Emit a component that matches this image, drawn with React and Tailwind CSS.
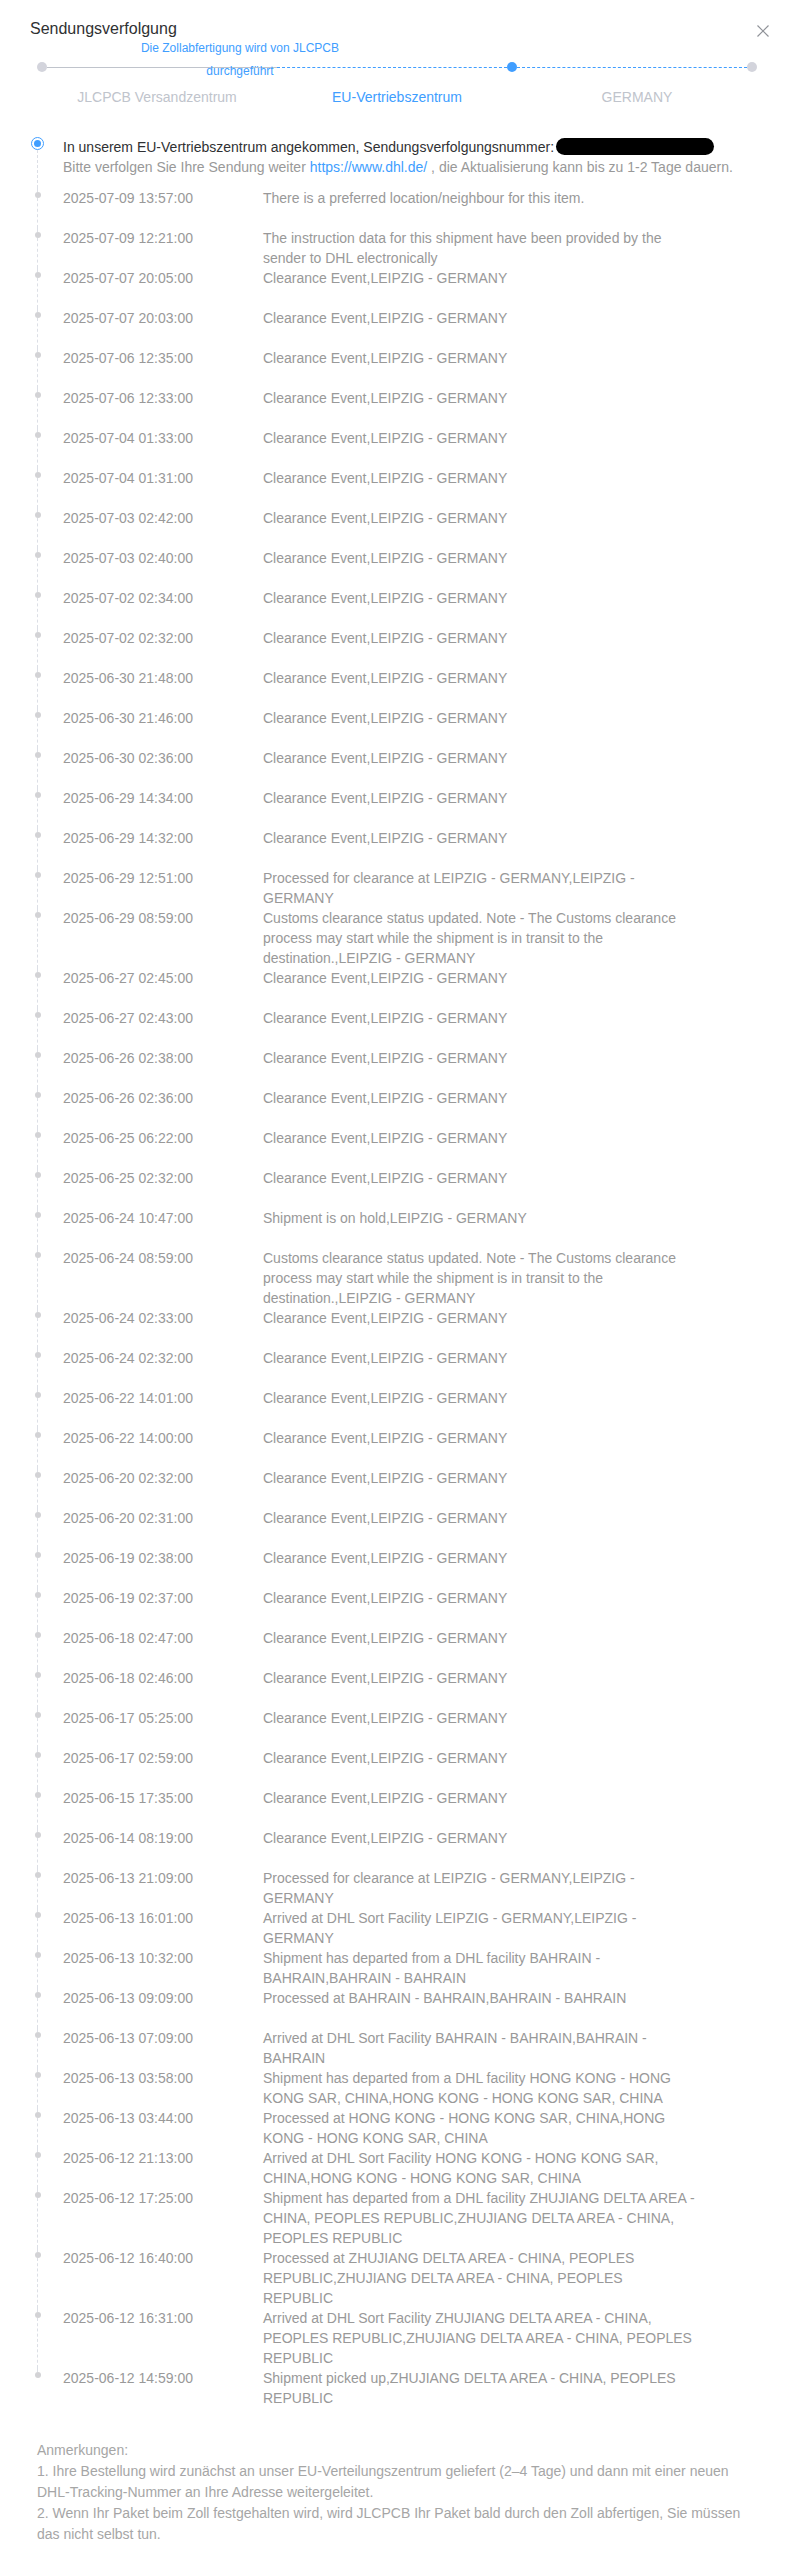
const CLR = 'Clearance Event,LEIPZIG - GERMANY';
const CUSTOMS =
  'Customs clearance status updated. Note - The Customs clearance process may start while the shipment is in transit to the destination.,LEIPZIG - GERMANY';
const ZJ = 'ZHUJIANG DELTA AREA - CHINA, PEOPLES REPUBLIC';
const HK = 'HONG KONG - HONG KONG SAR, CHINA';

const events = [
  ['2025-07-09 13:57:00', 'There is a preferred location/neighbour for this item.'],
  ['2025-07-09 12:21:00', 'The instruction data for this shipment have been provided by the sender to DHL electronically'],
  ['2025-07-07 20:05:00', CLR],
  ['2025-07-07 20:03:00', CLR],
  ['2025-07-06 12:35:00', CLR],
  ['2025-07-06 12:33:00', CLR],
  ['2025-07-04 01:33:00', CLR],
  ['2025-07-04 01:31:00', CLR],
  ['2025-07-03 02:42:00', CLR],
  ['2025-07-03 02:40:00', CLR],
  ['2025-07-02 02:34:00', CLR],
  ['2025-07-02 02:32:00', CLR],
  ['2025-06-30 21:48:00', CLR],
  ['2025-06-30 21:46:00', CLR],
  ['2025-06-30 02:36:00', CLR],
  ['2025-06-29 14:34:00', CLR],
  ['2025-06-29 14:32:00', CLR],
  ['2025-06-29 12:51:00', 'Processed for clearance at LEIPZIG - GERMANY,LEIPZIG - GERMANY'],
  ['2025-06-29 08:59:00', CUSTOMS],
  ['2025-06-27 02:45:00', CLR],
  ['2025-06-27 02:43:00', CLR],
  ['2025-06-26 02:38:00', CLR],
  ['2025-06-26 02:36:00', CLR],
  ['2025-06-25 06:22:00', CLR],
  ['2025-06-25 02:32:00', CLR],
  ['2025-06-24 10:47:00', 'Shipment is on hold,LEIPZIG - GERMANY'],
  ['2025-06-24 08:59:00', CUSTOMS],
  ['2025-06-24 02:33:00', CLR],
  ['2025-06-24 02:32:00', CLR],
  ['2025-06-22 14:01:00', CLR],
  ['2025-06-22 14:00:00', CLR],
  ['2025-06-20 02:32:00', CLR],
  ['2025-06-20 02:31:00', CLR],
  ['2025-06-19 02:38:00', CLR],
  ['2025-06-19 02:37:00', CLR],
  ['2025-06-18 02:47:00', CLR],
  ['2025-06-18 02:46:00', CLR],
  ['2025-06-17 05:25:00', CLR],
  ['2025-06-17 02:59:00', CLR],
  ['2025-06-15 17:35:00', CLR],
  ['2025-06-14 08:19:00', CLR],
  ['2025-06-13 21:09:00', 'Processed for clearance at LEIPZIG - GERMANY,LEIPZIG - GERMANY'],
  ['2025-06-13 16:01:00', 'Arrived at DHL Sort Facility LEIPZIG - GERMANY,LEIPZIG - GERMANY'],
  ['2025-06-13 10:32:00', 'Shipment has departed from a DHL facility BAHRAIN - BAHRAIN,BAHRAIN - BAHRAIN'],
  ['2025-06-13 09:09:00', 'Processed at BAHRAIN - BAHRAIN,BAHRAIN - BAHRAIN'],
  ['2025-06-13 07:09:00', 'Arrived at DHL Sort Facility BAHRAIN - BAHRAIN,BAHRAIN - BAHRAIN'],
  ['2025-06-13 03:58:00', `Shipment has departed from a DHL facility ${HK},${HK}`],
  ['2025-06-13 03:44:00', `Processed at ${HK},${HK}`],
  ['2025-06-12 21:13:00', `Arrived at DHL Sort Facility ${HK},${HK}`],
  ['2025-06-12 17:25:00', `Shipment has departed from a DHL facility ${ZJ},${ZJ}`],
  ['2025-06-12 16:40:00', `Processed at ${ZJ},${ZJ}`],
  ['2025-06-12 16:31:00', `Arrived at DHL Sort Facility ${ZJ},${ZJ}`],
  ['2025-06-12 14:59:00', `Shipment picked up,${ZJ}`],
];

function Stepper() {
  return (
    <div className="relative ml-[37px] w-[720px] pt-[21px]">
      <div className="absolute top-[-4px] left-[98px] w-[210px] text-center text-xs leading-[23px] text-[#409eff]">
        Die Zollabfertigung wird von JLCPCB durchgeführt
      </div>
      <div className="flex h-[10px] items-center">
        <span className="h-[10px] w-[10px] shrink-0 rounded-full bg-[#d3d4dc]" />
        <span className="w-[230px] border-t border-[#c0c4cc]" />
        <span className="flex-1 border-t border-dashed border-[#409eff]" />
        <span className="h-[10px] w-[10px] shrink-0 rounded-full bg-[#409eff]" />
        <span className="flex-1 border-t border-dashed border-[#409eff]" />
        <span className="h-[10px] w-[10px] shrink-0 rounded-full bg-[#d3d4dc]" />
      </div>
      <div className="mt-[15px] grid grid-cols-3 text-center text-sm leading-5">
        <span className="text-[#c0c4cc]">JLCPCB Versandzentrum</span>
        <span className="text-[#409eff]">EU-Vertriebszentrum</span>
        <span className="text-[#c0c4cc]">GERMANY</span>
      </div>
    </div>
  );
}

function EventRow({ date, text, last }) {
  return (
    <div className="flex min-h-[40px]">
      <div className="flex w-[13px] shrink-0 flex-col items-center">
        <span className="h-[4px] border-l border-dashed border-[#dcdfe6]" />
        <span className="h-[6px] w-[6px] rounded-full bg-[#d3d3d6]" />
        {!last && <span className="flex-1 border-l border-dashed border-[#dcdfe6]" />}
      </div>
      <div className="ml-[19px] w-[200px] shrink-0 text-sm leading-5 text-[#999]">{date}</div>
      <div className="w-[433px] text-sm leading-5 text-[#999]">{text}</div>
    </div>
  );
}

export default function App() {
  return (
    <div className="min-h-[2554px] w-[786px] bg-white font-['Liberation_Sans',Arial,sans-serif]">
      <div className="flex items-center justify-between pt-[17px] pr-[17px] pl-[30px]">
        <h2 className="text-base leading-6 text-[#303133]">Sendungsverfolgung</h2>
        <svg width="12" height="12" viewBox="0 0 12 12" className="mt-[4px]">
          <path d="M0.5 0.5 L11.5 11.5 M11.5 0.5 L0.5 11.5" stroke="#909399" strokeWidth="1.2" fill="none" />
        </svg>
      </div>

      <Stepper />

      <div className="mt-[30px] ml-[31px]">
        <div className="flex min-h-[51px]">
          <div className="flex w-[13px] shrink-0 flex-col items-center">
            <span className="flex h-[13px] w-[13px] items-center justify-center rounded-full border border-[#409eff] bg-white">
              <span className="h-[7px] w-[7px] rounded-full bg-[#409eff]" />
            </span>
            <span className="flex-1 border-l border-dashed border-[#dcdfe6]" />
          </div>
          <div className="ml-[19px] text-sm leading-5">
            <p className="text-[#303133]">
              In unserem EU-Vertriebszentrum angekommen, Sendungsverfolgungsnummer:
              <span className="ml-[2px] inline-block h-[17px] w-[158px] rounded-[9px] bg-black align-[-3px]" />
            </p>
            <p className="text-[#999]">
              Bitte verfolgen Sie Ihre Sendung weiter <span className="text-[#409eff]">https://www.dhl.de/</span> , die
              Aktualisierung kann bis zu 1-2 Tage dauern.
            </p>
          </div>
        </div>
        {events.map(([date, text], i) => (
          <EventRow key={date + i} date={date} text={text} last={i === events.length - 1} />
        ))}
      </div>

      <div className="mt-[32px] ml-[37px] w-[716px] text-sm leading-[21px] text-[#a6a6a6]">
        <p>Anmerkungen:</p>
        <p>
          1. Ihre Bestellung wird zunächst an unser EU-Verteilungszentrum geliefert (2–4 Tage) und dann mit einer neuen
          DHL-Tracking-Nummer an Ihre Adresse weitergeleitet.
        </p>
        <p>
          2. Wenn Ihr Paket beim Zoll festgehalten wird, wird JLCPCB Ihr Paket bald durch den Zoll abfertigen, Sie müssen
          das nicht selbst tun.
        </p>
      </div>
    </div>
  );
}
